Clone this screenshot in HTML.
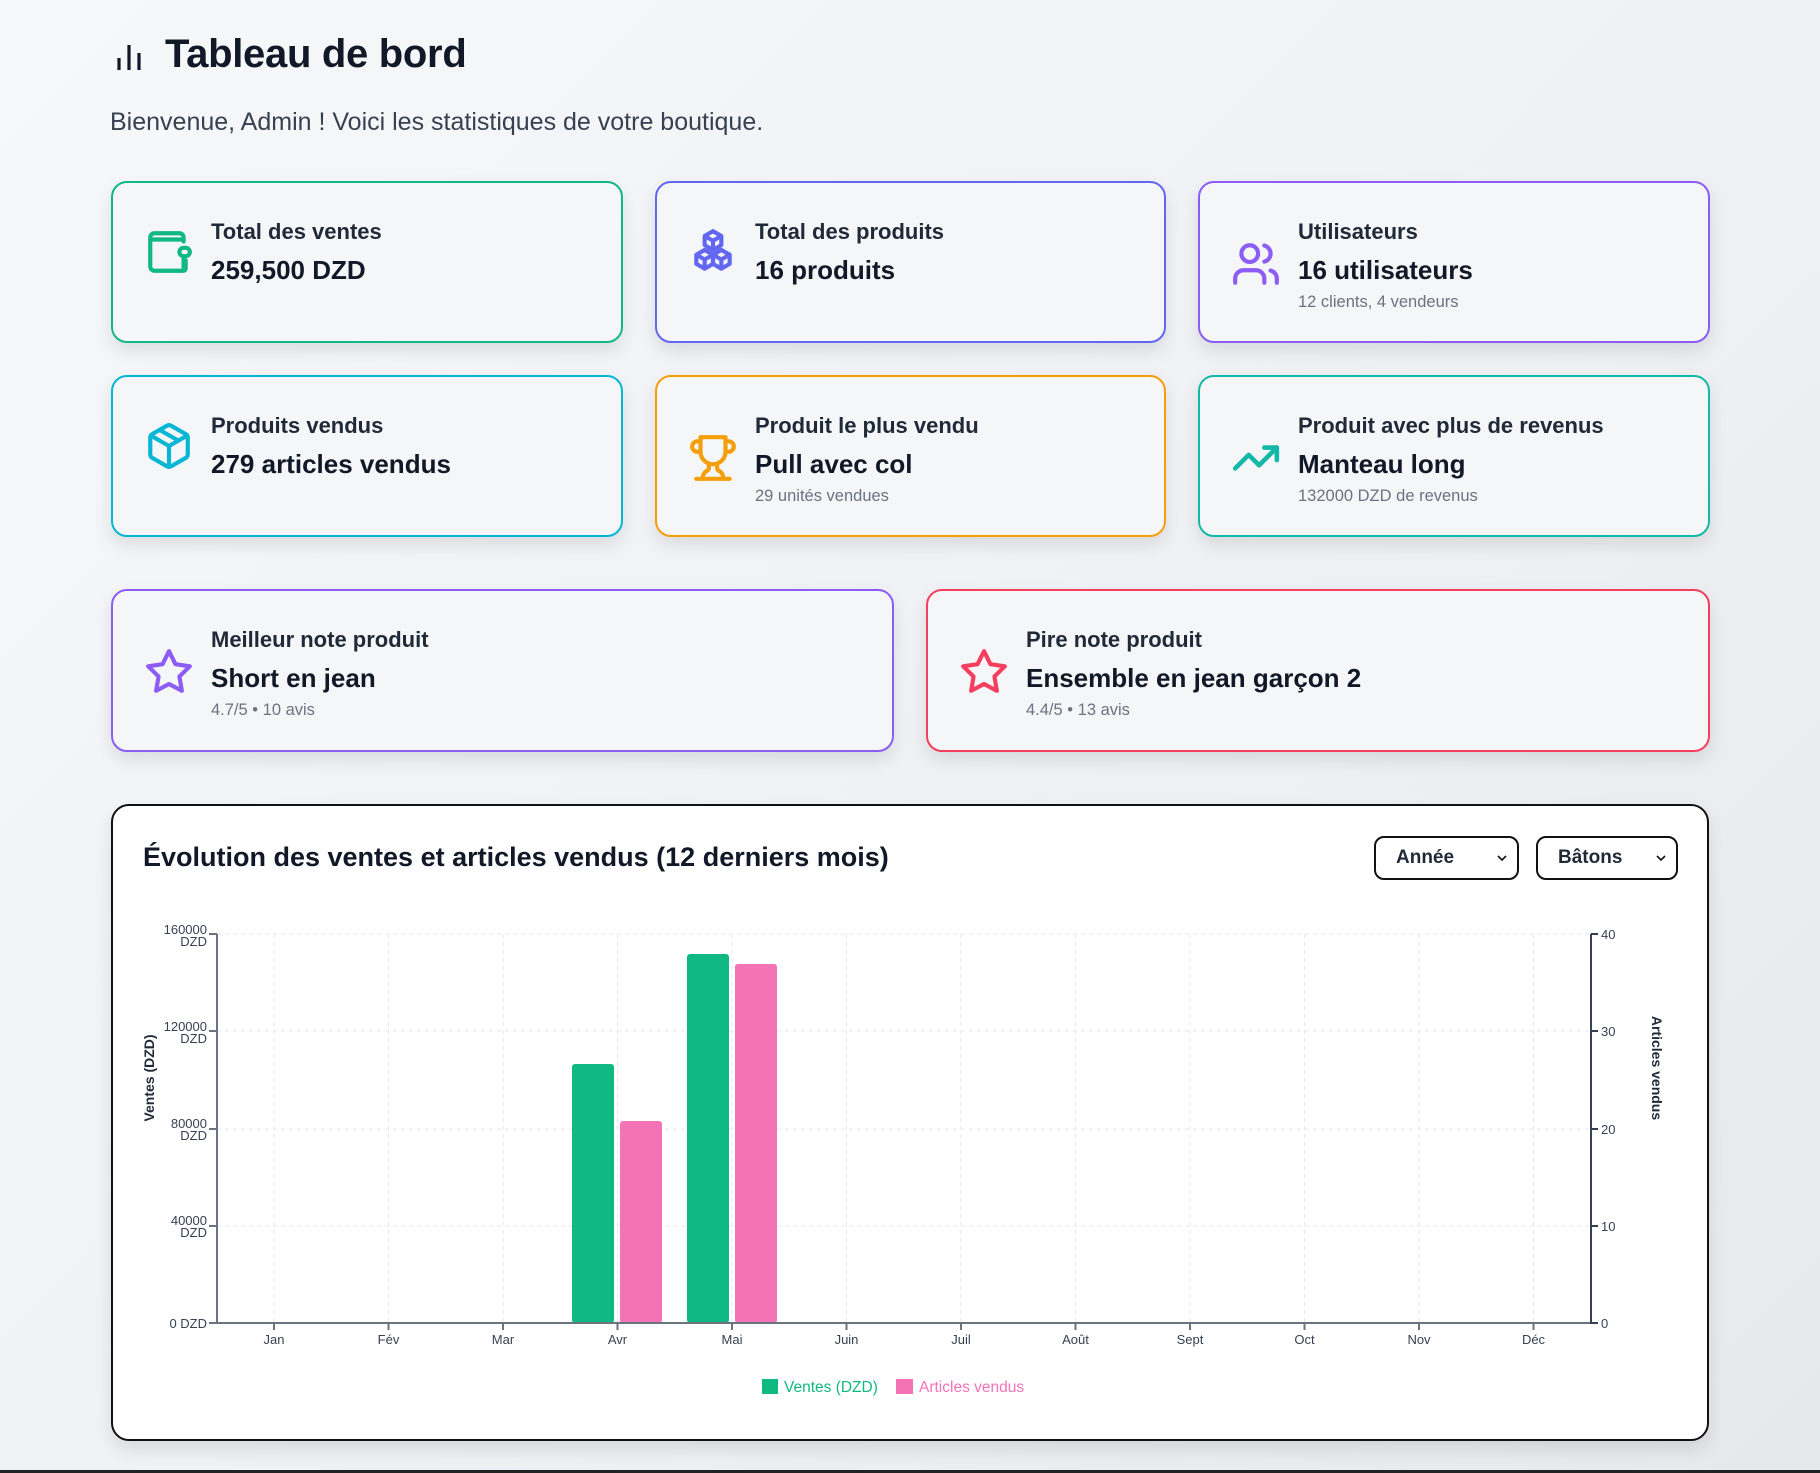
<!DOCTYPE html>
<html><head><meta charset="utf-8"><style>
*{box-sizing:border-box;margin:0;padding:0}
body{width:1820px;height:1473px;overflow:hidden;font-family:"Liberation Sans",sans-serif;background:linear-gradient(135deg,#f7f8fa 0%,#eef0f3 60%,#e6e8ec 100%);position:relative;color:#111827}
.h1{position:absolute;left:165px;top:32px;font-size:40px;font-weight:700;color:#111827;letter-spacing:-0.3px}
.sub{position:absolute;left:110px;top:108px;font-size:25px;color:#374151}
.card{position:absolute;background:#f5f6f8;border:2px solid;border-radius:16px;box-shadow:0 8px 18px rgba(0,0,0,0.10)}
.card .ic{position:absolute;left:31px;width:50px;height:50px}
.card .t{position:absolute;left:98px;top:36px;font-size:22px;font-weight:600;color:#1f2937;white-space:nowrap}
.card .v{position:absolute;left:98px;top:72px;font-size:26px;font-weight:700;color:#111827;white-space:nowrap}
.card .s{position:absolute;left:98px;top:110px;font-size:16.5px;color:#6b7280;white-space:nowrap}
.chart{position:absolute;left:111px;top:804px;width:1598px;height:637px;background:#fff;border:2px solid #111;border-radius:18px;box-shadow:0 8px 18px rgba(0,0,0,0.10)}
.ct{position:absolute;left:143px;top:842px;font-size:27px;font-weight:700;color:#111827}
.sel{position:absolute;top:836px;height:44px;border:2px solid #111;border-radius:10px;background:#fff;font-size:19px;font-weight:700;color:#1f2937;padding-left:20px;line-height:40px}
.bottomline{position:absolute;left:0;top:1470px;width:1820px;height:3px;background:#222}
</style></head><body>
<svg style="position:absolute;left:112px;top:38px" width="34" height="34" viewBox="0 0 34 34"><g stroke="#111827" stroke-width="3.2"><line x1="7" y1="20" x2="7" y2="32"/><line x1="17" y1="7" x2="17" y2="32"/><line x1="27" y1="15" x2="27" y2="32"/></g></svg>
<div class="h1">Tableau de bord</div>
<div class="sub">Bienvenue, Admin ! Voici les statistiques de votre boutique.</div>

<div class="card" style="left:111px;top:181px;width:512px;height:162px;border-color:#10b981">
<svg class="ic" style="top:44px" viewBox="0 0 24 24" fill="none" stroke="#10b981" stroke-width="2" stroke-linecap="round" stroke-linejoin="round"><path d="M19 7V5a2 2 0 0 0-2-2H5a2 2 0 0 0-2 2v14a2 2 0 0 0 2 2h14a1 1 0 0 0 1-1v-4"/><path d="M3 6h16"/><rect x="17" y="10" width="5" height="4" rx="2"/><path d="M19 14v6"/></svg>
<div class="t">Total des ventes</div><div class="v">259,500 DZD</div></div>

<div class="card" style="left:655px;top:181px;width:511px;height:162px;border-color:#6366f1">
<svg class="ic" style="top:44px" viewBox="0 0 24 24" fill="none" stroke="#6366f1" stroke-width="2" stroke-linejoin="round"><path d="M12 2l4 2.3v4.4L12 11 8 8.7V4.3z"/><path d="M8 11l4 2.3v4.4L8 20l-4-2.3v-4.4z"/><path d="M16 11l4 2.3v4.4L16 20l-4-2.3v-4.4z"/><path d="M8 4.3l4 2.3 4-2.3M12 6.6V11M4 13.3l4 2.3 4-2.3M8 15.6V20M12 13.3l4 2.3 4-2.3M16 15.6V20"/></svg>
<div class="t">Total des produits</div><div class="v">16 produits</div></div>

<div class="card" style="left:1198px;top:181px;width:512px;height:162px;border-color:#8b5cf6">
<svg class="ic" style="top:56px" viewBox="0 0 24 24" fill="none" stroke="#8b5cf6" stroke-width="2" stroke-linecap="round" stroke-linejoin="round"><path d="M16 21v-2a4 4 0 0 0-4-4H6a4 4 0 0 0-4 4v2"/><circle cx="9" cy="7" r="4"/><path d="M22 21v-2a4 4 0 0 0-3-3.87"/><path d="M16 3.13a4 4 0 0 1 0 7.75"/></svg>
<div class="t">Utilisateurs</div><div class="v">16 utilisateurs</div><div class="s">12 clients, 4 vendeurs</div></div>

<div class="card" style="left:111px;top:375px;width:512px;height:162px;border-color:#06b6d4">
<svg class="ic" style="top:44px" viewBox="0 0 24 24" fill="none" stroke="#06b6d4" stroke-width="2" stroke-linecap="round" stroke-linejoin="round"><path d="M21 8a2 2 0 0 0-1-1.73l-7-4a2 2 0 0 0-2 0l-7 4A2 2 0 0 0 3 8v8a2 2 0 0 0 1 1.73l7 4a2 2 0 0 0 2 0l7-4A2 2 0 0 0 21 16z"/><path d="M3.3 7L12 12l8.7-5"/><path d="M12 22V12"/><path d="M7.5 4.27l9 5.15"/></svg>
<div class="t">Produits vendus</div><div class="v">279 articles vendus</div></div>

<div class="card" style="left:655px;top:375px;width:511px;height:162px;border-color:#f59e0b">
<svg class="ic" style="top:56px" viewBox="0 0 24 24" fill="none" stroke="#f59e0b" stroke-width="2" stroke-linecap="round" stroke-linejoin="round"><path d="M6 9H4.5a2.5 2.5 0 0 1 0-5H6"/><path d="M18 9h1.5a2.5 2.5 0 0 0 0-5H18"/><path d="M4 22h16"/><path d="M10 14.66V17c0 .55-.47.98-.97 1.21C7.85 18.75 7 20.24 7 22"/><path d="M14 14.66V17c0 .55.47.98.97 1.21C16.150 18.75 17 20.24 17 22"/><path d="M18 2H6v7a6 6 0 0 0 12 0V2z"/></svg>
<div class="t">Produit le plus vendu</div><div class="v">Pull avec col</div><div class="s">29 unités vendues</div></div>

<div class="card" style="left:1198px;top:375px;width:512px;height:162px;border-color:#14b8a6">
<svg class="ic" style="top:56px" viewBox="0 0 24 24" fill="none" stroke="#14b8a6" stroke-width="2.2" stroke-linecap="round" stroke-linejoin="round"><polyline points="22 7 13.5 15.5 8.5 10.5 2 17"/><polyline points="16 7 22 7 22 13"/></svg>
<div class="t">Produit avec plus de revenus</div><div class="v">Manteau long</div><div class="s">132000 DZD de revenus</div></div>

<div class="card" style="left:111px;top:589px;width:783px;height:163px;border-color:#8b5cf6">
<svg class="ic" style="top:56px" viewBox="0 0 24 24" fill="none" stroke="#8b5cf6" stroke-width="2" stroke-linecap="round" stroke-linejoin="round"><polygon points="12 2 15.09 8.26 22 9.27 17 14.14 18.18 21.02 12 17.77 5.82 21.02 7 14.14 2 9.27 8.91 8.26 12 2"/></svg>
<div class="t">Meilleur note produit</div><div class="v">Short en jean</div><div class="s">4.7/5 • 10 avis</div></div>

<div class="card" style="left:926px;top:589px;width:784px;height:163px;border-color:#f43f5e">
<svg class="ic" style="top:56px" viewBox="0 0 24 24" fill="none" stroke="#f43f5e" stroke-width="2" stroke-linecap="round" stroke-linejoin="round"><polygon points="12 2 15.09 8.26 22 9.27 17 14.14 18.18 21.02 12 17.77 5.82 21.02 7 14.14 2 9.27 8.91 8.26 12 2"/></svg>
<div class="t">Pire note produit</div><div class="v">Ensemble en jean garçon 2</div><div class="s">4.4/5 • 13 avis</div></div>

<div class="chart"></div>
<div class="ct">Évolution des ventes et articles vendus (12 derniers mois)</div>
<div class="sel" style="left:1374px;width:145px">Année<svg style="position:absolute;right:10px;top:16px" width="10" height="8" viewBox="0 0 10 8"><path d="M1 2l4 4 4-4" fill="none" stroke="#111" stroke-width="1.6"/></svg></div>
<div class="sel" style="left:1536px;width:142px">Bâtons<svg style="position:absolute;right:10px;top:16px" width="10" height="8" viewBox="0 0 10 8"><path d="M1 2l4 4 4-4" fill="none" stroke="#111" stroke-width="1.6"/></svg></div>

<svg style="position:absolute;left:0;top:0" width="1820" height="1473" viewBox="0 0 1820 1473" font-family="Liberation Sans, sans-serif">
<g stroke="#e5e7eb" stroke-dasharray="4 4" stroke-width="1">
<line x1="217" y1="934" x2="1590" y2="934"/><line x1="217" y1="1031" x2="1590" y2="1031"/><line x1="217" y1="1129" x2="1590" y2="1129"/><line x1="217" y1="1226" x2="1590" y2="1226"/>
<line x1="274" y1="934" x2="274" y2="1323"/><line x1="388.5" y1="934" x2="388.5" y2="1323"/><line x1="503" y1="934" x2="503" y2="1323"/><line x1="617.5" y1="934" x2="617.5" y2="1323"/><line x1="732" y1="934" x2="732" y2="1323"/><line x1="846.5" y1="934" x2="846.5" y2="1323"/><line x1="961" y1="934" x2="961" y2="1323"/><line x1="1075.5" y1="934" x2="1075.5" y2="1323"/><line x1="1190" y1="934" x2="1190" y2="1323"/><line x1="1304.5" y1="934" x2="1304.5" y2="1323"/><line x1="1419" y1="934" x2="1419" y2="1323"/><line x1="1533.5" y1="934" x2="1533.5" y2="1323"/>
</g>
<rect x="572" y="1064" width="42" height="259" rx="3" fill="#10b981"/>
<rect x="620" y="1121" width="42" height="202" rx="3" fill="#f472b6"/>
<rect x="687" y="954" width="42" height="369" rx="3" fill="#10b981"/>
<rect x="735" y="964" width="42" height="359" rx="3" fill="#f472b6"/>
<g stroke="#6b7280" stroke-width="2" fill="none">
<line x1="217" y1="934" x2="217" y2="1324"/><line x1="216" y1="1323" x2="1591" y2="1323"/>
<line x1="209" y1="934" x2="217" y2="934"/><line x1="209" y1="1031" x2="217" y2="1031"/><line x1="209" y1="1129" x2="217" y2="1129"/><line x1="209" y1="1226" x2="217" y2="1226"/><line x1="209" y1="1323" x2="217" y2="1323"/>
<path d="M274 1323v7M388.5 1323v7M503 1323v7M617.5 1323v7M732 1323v7M846.5 1323v7M961 1323v7M1075.5 1323v7M1190 1323v7M1304.5 1323v7M1419 1323v7M1533.5 1323v7"/>
</g>
<g stroke="#374151" stroke-width="2"><line x1="1591" y1="934" x2="1591" y2="1324"/><path d="M1591 934h7M1591 1031h7M1591 1129h7M1591 1226h7M1591 1323h7"/></g>
<g font-size="13" fill="#374151" text-anchor="end">
<text x="207" y="934">160000</text><text x="207" y="946">DZD</text>
<text x="207" y="1031">120000</text><text x="207" y="1043">DZD</text>
<text x="207" y="1128">80000</text><text x="207" y="1140">DZD</text>
<text x="207" y="1225">40000</text><text x="207" y="1237">DZD</text>
<text x="207" y="1328">0 DZD</text>
</g>
<g font-size="13" fill="#374151">
<text x="1601" y="939">40</text><text x="1601" y="1036">30</text><text x="1601" y="1134">20</text><text x="1601" y="1231">10</text><text x="1601" y="1328">0</text>
</g>
<g font-size="13" fill="#374151" text-anchor="middle">
<text x="274" y="1344">Jan</text><text x="388.5" y="1344">Fév</text><text x="503" y="1344">Mar</text><text x="617.5" y="1344">Avr</text><text x="732" y="1344">Mai</text><text x="846.5" y="1344">Juin</text><text x="961" y="1344">Juil</text><text x="1075.5" y="1344">Août</text><text x="1190" y="1344">Sept</text><text x="1304.5" y="1344">Oct</text><text x="1419" y="1344">Nov</text><text x="1533.5" y="1344">Déc</text>
</g>
<text transform="translate(154,1078) rotate(-90)" text-anchor="middle" font-size="14" font-weight="700" fill="#1f2937">Ventes (DZD)</text>
<text transform="translate(1652,1068) rotate(90)" text-anchor="middle" font-size="14" font-weight="700" fill="#1f2937">Articles vendus</text>
<rect x="762" y="1379" width="16" height="15" fill="#10b981"/>
<text x="784" y="1392" font-size="15.5" fill="#10b981">Ventes (DZD)</text>
<rect x="896" y="1379" width="17" height="15" fill="#f472b6"/>
<text x="919" y="1392" font-size="15.5" fill="#f472b6">Articles vendus</text>
</svg>
<div class="bottomline"></div>
</body></html>
